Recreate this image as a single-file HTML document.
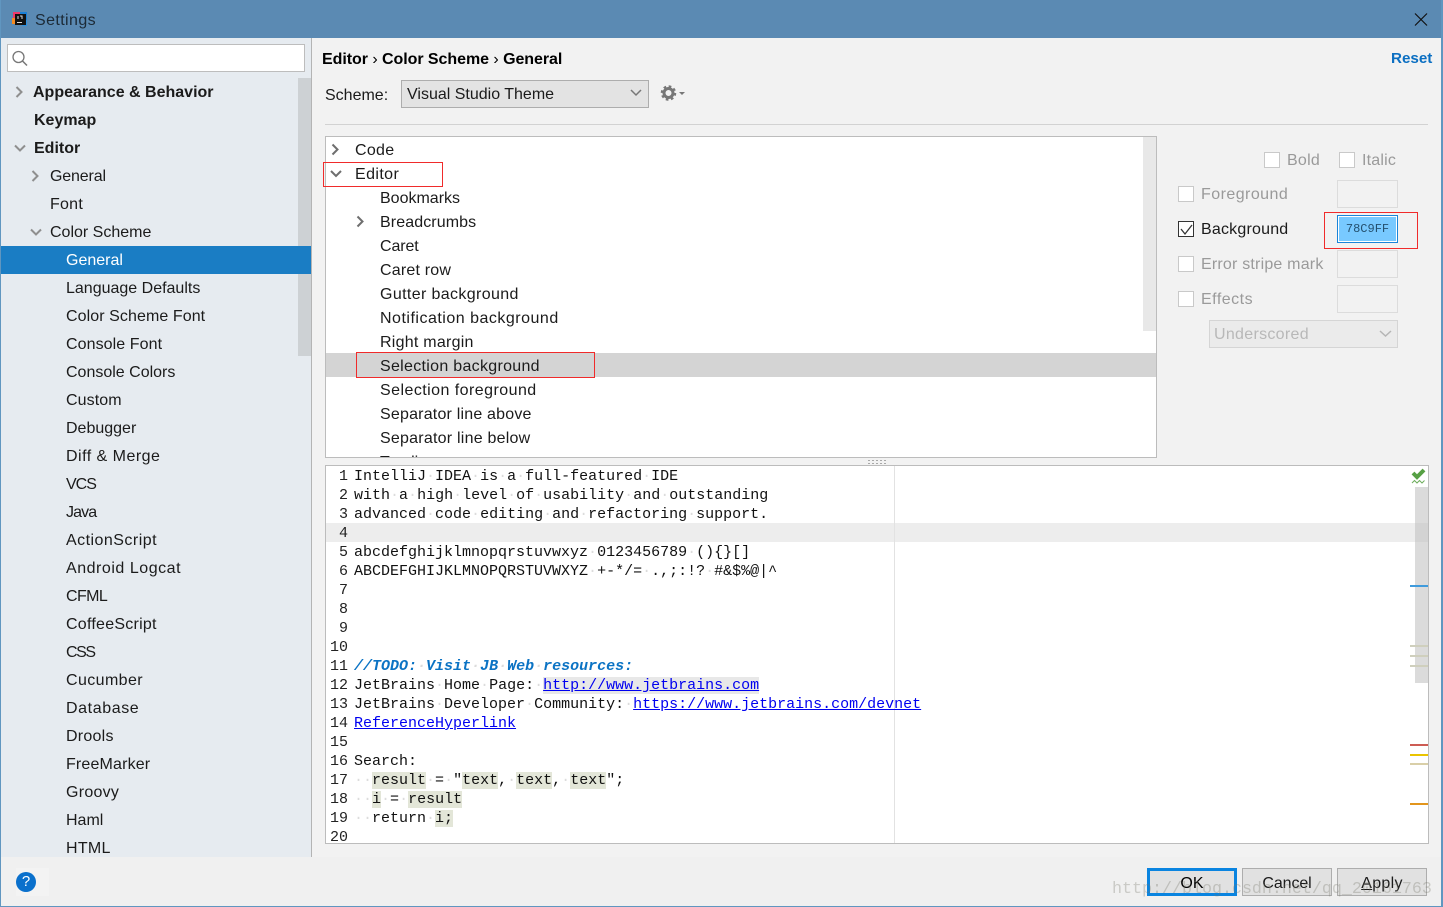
<!DOCTYPE html>
<html><head><meta charset="utf-8"><title>Settings</title>
<style>
html,body{margin:0;padding:0;width:1443px;height:907px;overflow:hidden;background:#f2f2f2}
body{position:relative;font-family:"Liberation Sans",sans-serif;font-size:16px;color:#1b1b1b}
.a{position:absolute}
.t{position:absolute;height:28px;line-height:28px;white-space:nowrap;margin-top:2px}
.s{left:66px}
.b{font-weight:bold;font-size:16px}
.tr{left:380px}
.g{color:#9a9a9a}
.c{position:absolute;width:14px;height:14px;background:#fff;border:1px solid #c9c9c9}
.sw{position:absolute;left:1337px;width:59px;height:26px;border:1px solid #dcdcdc;background:#f2f2f2}
.m{position:absolute;left:354px;height:19px;line-height:19px;margin-top:1px;font-family:"Liberation Mono",monospace;font-size:15px;white-space:pre;color:#111}
.n{position:absolute;left:326px;width:22px;text-align:right;height:19px;line-height:19px;margin-top:1px;font-family:"Liberation Mono",monospace;font-size:15px;color:#222}
.btn{position:absolute;top:868px;width:88px;height:26px;line-height:30px;border:1px solid #adadad;background:#e1e1e1;text-align:center}
.d{color:#dcdcdc}
.h{background:#e3e6d8}
.l{color:#0000f0;text-decoration:underline}
.r{position:absolute;border:1px solid #f02b2b;box-sizing:border-box}
.k{position:absolute;left:1410px;width:18px;height:2px}
</style></head><body>

<div class="a" style="left:0;top:0;width:1443px;height:38px;background:#5b8ab3"></div>
<div class="t" style="left:35px;top:5px;letter-spacing:.4px;color:#1c2a36">Settings</div>

<div class="a" style="left:1px;top:38px;width:310px;height:819px;background:#e6ebf0"></div>
<div class="a" style="left:311px;top:38px;width:1px;height:819px;background:#b4b4b4"></div>
<div class="a" style="left:7px;top:44px;width:296px;height:26px;background:#fff;border:1px solid #bdbdbd"></div>
<div class="a" style="left:298px;top:78px;width:13px;height:278px;background:#cdd1d4"></div>
<div class="a" style="left:1px;top:246px;width:310px;height:28px;background:#1a7dc4"></div>

<div class="t b" style="left:33px;top:77px">Appearance &amp; Behavior</div>
<div class="t b" style="left:34px;top:105px">Keymap</div>
<div class="t b" style="left:34px;top:133px">Editor</div>
<div class="t" style="left:50px;top:161px;letter-spacing:-.15px">General</div>
<div class="t" style="left:50px;top:189px;letter-spacing:.25px">Font</div>
<div class="t" style="left:50px;top:217px">Color Scheme</div>
<div class="t s" style="top:245px;color:#fff">General</div>
<div class="t s" style="top:273px">Language Defaults</div>
<div class="t s" style="top:301px;letter-spacing:.08px">Color Scheme Font</div>
<div class="t s" style="top:329px;letter-spacing:.08px">Console Font</div>
<div class="t s" style="top:357px">Console Colors</div>
<div class="t s" style="top:385px;letter-spacing:.1px">Custom</div>
<div class="t s" style="top:413px">Debugger</div>
<div class="t s" style="top:441px;letter-spacing:.48px">Diff &amp; Merge</div>
<div class="t s" style="top:469px;letter-spacing:-1px">VCS</div>
<div class="t s" style="top:497px;letter-spacing:-.9px">Java</div>
<div class="t s" style="top:525px;letter-spacing:.47px">ActionScript</div>
<div class="t s" style="top:553px;letter-spacing:.53px">Android Logcat</div>
<div class="t s" style="top:581px;letter-spacing:-.6px">CFML</div>
<div class="t s" style="top:609px;letter-spacing:.25px">CoffeeScript</div>
<div class="t s" style="top:637px;letter-spacing:-1.4px">CSS</div>
<div class="t s" style="top:665px;letter-spacing:.4px">Cucumber</div>
<div class="t s" style="top:693px;letter-spacing:.6px">Database</div>
<div class="t s" style="top:721px;letter-spacing:.25px">Drools</div>
<div class="t s" style="top:749px;letter-spacing:.16px">FreeMarker</div>
<div class="t s" style="top:777px;letter-spacing:.27px">Groovy</div>
<div class="t s" style="top:805px">Haml</div>
<div class="t s" style="top:833px;letter-spacing:.3px">HTML</div>

<div class="t b" style="left:322px;top:44px;color:#000;letter-spacing:-.05px">Editor <span style="font-weight:normal">›</span> Color Scheme <span style="font-weight:normal">›</span> General</div>
<div class="t b" style="left:1391px;top:43px;font-size:15.200px;color:#0b6fc2">Reset</div>
<div class="t" style="left:325px;top:80px">Scheme:</div>
<div class="a" style="left:401px;top:80px;width:246px;height:26px;background:#e3e3e3;border:1px solid #adadad"></div>
<div class="t" style="left:407px;top:79px">Visual Studio Theme</div>
<div class="a" style="left:325px;top:124px;width:1103px;height:1px;background:#d2d2d2"></div>

<div class="a" style="left:325px;top:136px;width:830px;height:320px;background:#fff;border:1px solid #bcbcbc;overflow:hidden">
  <div class="a" style="left:817px;top:0;width:13px;height:194px;background:#e8e8e8"></div>
  <div class="a" style="left:0;top:216px;width:830px;height:24px;background:#d4d4d4"></div>
  <div class="t" style="left:54px;top:310px">Tearlines</div>
</div>
<div class="t" style="left:355px;top:135px;letter-spacing:.3px">Code</div>
<div class="t" style="left:355px;top:159px;letter-spacing:.4px">Editor</div>
<div class="t tr" style="top:183px">Bookmarks</div>
<div class="t tr" style="top:207px;letter-spacing:.1px">Breadcrumbs</div>
<div class="t tr" style="top:231px;letter-spacing:-.1px">Caret</div>
<div class="t tr" style="top:255px;letter-spacing:.2px">Caret row</div>
<div class="t tr" style="top:279px;letter-spacing:.37px">Gutter background</div>
<div class="t tr" style="top:303px;letter-spacing:.5px">Notification background</div>
<div class="t tr" style="top:327px;letter-spacing:.25px">Right margin</div>
<div class="t tr" style="top:351px;letter-spacing:.3px">Selection background</div>
<div class="t tr" style="top:375px;letter-spacing:.45px">Selection foreground</div>
<div class="t tr" style="top:399px;letter-spacing:.2px">Separator line above</div>
<div class="t tr" style="top:423px;letter-spacing:.23px">Separator line below</div>

<div class="r" style="left:323px;top:162px;width:120px;height:25px"></div>
<div class="r" style="left:356px;top:352px;width:239px;height:26px"></div>
<div class="r" style="left:1324px;top:212px;width:94px;height:37px"></div>

<div class="c" style="left:1264px;top:152px"></div><div class="t g" style="left:1287px;top:145px;letter-spacing:.25px">Bold</div>
<div class="c" style="left:1339px;top:152px"></div><div class="t g" style="left:1362px;top:145px;letter-spacing:.2px">Italic</div>
<div class="c" style="left:1178px;top:186px"></div><div class="t g" style="left:1201px;top:179px;letter-spacing:.45px">Foreground</div>
<div class="c" style="left:1178px;top:221px;border-color:#333"></div><div class="t" style="left:1201px;top:214px;letter-spacing:.2px">Background</div>
<div class="c" style="left:1178px;top:256px"></div><div class="t g" style="left:1201px;top:249px;letter-spacing:.2px">Error stripe mark</div>
<div class="c" style="left:1178px;top:291px"></div><div class="t g" style="left:1201px;top:284px;letter-spacing:.5px">Effects</div>
<div class="sw" style="top:180px"></div>
<div class="a" style="left:1337px;top:215px;width:57px;height:24px;background:#78c9ff;border:1px solid #fff;outline:1px solid #1a84d8;outline-offset:0;margin:1px;font-family:'Liberation Mono',monospace;font-size:12px;line-height:24px;text-align:center;color:#24506e">78C9FF</div>
<div class="sw" style="top:250px"></div>
<div class="sw" style="top:285px"></div>
<div class="a" style="left:1209px;top:320px;width:187px;height:26px;background:#ebebeb;border:1px solid #d5d5d5"></div>
<div class="t" style="left:1214px;top:319px;color:#b8b8b8;letter-spacing:.3px">Underscored</div>

<div class="a" style="left:325px;top:465px;width:1102px;height:377px;background:#fff;border:1px solid #bcbcbc"></div>
<div class="a" style="left:326px;top:523px;width:1102px;height:19px;background:#ededed"></div>
<div class="a" style="left:894px;top:466px;width:1px;height:377px;background:#e2e2e2"></div>
<div class="a" style="left:1415px;top:487px;width:13px;height:196px;background:rgba(190,190,190,.55)"></div>

<div class="k" style="top:585px;background:#3f9bdc"></div>
<div class="k" style="top:645px;background:#cfcfbd"></div>
<div class="k" style="top:655px;background:#cfcfbd"></div>
<div class="k" style="top:665px;background:#cfcfbd"></div>
<div class="k" style="top:744px;background:#cd5c54"></div>
<div class="k" style="top:754px;background:#eac400"></div>
<div class="k" style="top:763px;background:#d9cfa8"></div>
<div class="k" style="top:803px;background:#e2951c"></div>

<div class="n" style="top:466px">1</div><div class="m" style="top:466px">IntelliJ<span class="d">·</span>IDEA<span class="d">·</span>is<span class="d">·</span>a<span class="d">·</span>full-featured<span class="d">·</span>IDE</div>
<div class="n" style="top:485px">2</div><div class="m" style="top:485px">with<span class="d">·</span>a<span class="d">·</span>high<span class="d">·</span>level<span class="d">·</span>of<span class="d">·</span>usability<span class="d">·</span>and<span class="d">·</span>outstanding</div>
<div class="n" style="top:504px">3</div><div class="m" style="top:504px">advanced<span class="d">·</span>code<span class="d">·</span>editing<span class="d">·</span>and<span class="d">·</span>refactoring<span class="d">·</span>support.</div>
<div class="n" style="top:523px">4</div>
<div class="n" style="top:542px">5</div><div class="m" style="top:542px">abcdefghijklmnopqrstuvwxyz<span class="d">·</span>0123456789<span class="d">·</span>(){}[]</div>
<div class="n" style="top:561px">6</div><div class="m" style="top:561px">ABCDEFGHIJKLMNOPQRSTUVWXYZ<span class="d">·</span>+-*/=<span class="d">·</span>.,;:!?<span class="d">·</span>#&amp;$%@|^</div>
<div class="n" style="top:580px">7</div>
<div class="n" style="top:599px">8</div>
<div class="n" style="top:618px">9</div>
<div class="n" style="top:637px">10</div>
<div class="n" style="top:656px">11</div><div class="m" style="top:656px;color:#0b73c4;font-weight:bold;font-style:italic">//TODO:<span class="d">·</span>Visit<span class="d">·</span>JB<span class="d">·</span>Web<span class="d">·</span>resources:</div>
<div class="n" style="top:675px">12</div><div class="m" style="top:675px">JetBrains<span class="d">·</span>Home<span class="d">·</span>Page:<span class="d">·</span><span class="l" style="background:#e8e8e8">http://www.jetbrains.com</span></div>
<div class="n" style="top:694px">13</div><div class="m" style="top:694px">JetBrains<span class="d">·</span>Developer<span class="d">·</span>Community:<span class="d">·</span><span class="l">https://www.jetbrains.com/devnet</span></div>
<div class="n" style="top:713px">14</div><div class="m" style="top:713px"><span class="l">ReferenceHyperlink</span></div>
<div class="n" style="top:732px">15</div>
<div class="n" style="top:751px">16</div><div class="m" style="top:751px">Search:</div>
<div class="n" style="top:770px">17</div><div class="m" style="top:770px"><span class="d">··</span><span class="h">result</span><span class="d">·</span>=<span class="d">·</span>"<span class="h">text</span>,<span class="d">·</span><span class="h">text</span>,<span class="d">·</span><span class="h">text</span>";</div>
<div class="n" style="top:789px">18</div><div class="m" style="top:789px"><span class="d">··</span><span class="h">i</span><span class="d">·</span>=<span class="d">·</span><span class="h">result</span></div>
<div class="n" style="top:808px">19</div><div class="m" style="top:808px"><span class="d">··</span>return<span class="d">·</span><span class="h">i;</span></div>
<div class="n" style="top:827px;height:15px;overflow:hidden">20</div>

<div class="a" style="left:0;top:857px;width:1443px;height:50px;background:#f0f0f0"></div>
<div class="a" style="left:16px;top:868px;width:33px;height:28px;background:#f3f3f3"></div>
<div class="a" style="left:16px;top:872px;width:20px;height:20px;border-radius:50%;background:#0a70cc;color:#fff;text-align:center;line-height:20px;font-size:15px">?</div>

<div class="btn" style="left:1147px;width:84px;height:22px;line-height:26px;border:3px solid #0a84e0;color:#000;letter-spacing:.1px">OK</div>
<div class="btn" style="left:1242px;letter-spacing:-.1px">Cancel</div>
<div class="btn" style="left:1337px;letter-spacing:.3px"><u>A</u>pply</div>
<div class="t" style="left:1112px;top:874px;font-family:'Liberation Mono',monospace;font-size:16.670px;color:rgba(120,120,110,.32)">http://blog.csdn.net/qq_20161763</div>

<div class="a" style="left:0;top:0;width:1px;height:907px;background:#6096c0"></div>
<div class="a" style="left:1441px;top:0;width:2px;height:907px;background:#6096c0"></div>
<div class="a" style="left:0;top:906px;width:1443px;height:1px;background:#6096c0"></div>

<svg class="a" style="left:0;top:0" width="1443" height="907" viewBox="0 0 1443 907" fill="none">
  <rect x="13" y="12" width="7" height="9" fill="#ee3a6a"/>
  <rect x="20" y="12" width="7" height="9" fill="#1a7fd6"/>
  <rect x="12" y="18" width="5" height="6" fill="#f58a20"/>
  <rect x="22" y="20" width="5" height="6" fill="#2a8fe0"/>
  <rect x="15" y="14" width="11" height="11" fill="#111"/>
  <rect x="17" y="22" width="5" height="1" fill="#ddd"/>
  <path d="M18 16v3M20 16h2v3" stroke="#ddd"/>
  <path d="M1415 13.500L1427 25.500M1427 13.500L1415 25.500" stroke="#111" stroke-width="1.200"/>

  <circle cx="18.500" cy="57" r="5.500" stroke="#777" stroke-width="1.300"/>
  <path d="M22.500 61L27 65.500" stroke="#777" stroke-width="1.500"/>

  <g stroke="#8f8f8f" stroke-width="2">
    <path d="M16.500 87L21.500 92L16.500 97"/>
    <path d="M15 145.500L20 150.500L25 145.500"/>
    <path d="M32.500 171L37.500 176L32.500 181"/>
    <path d="M31 229.500L36 234.500L41 229.500"/>
  </g>
  <g stroke="#6e6e6e" stroke-width="2">
    <path d="M332.500 144.500L337.500 149.500L332.500 154.500"/>
    <path d="M331 171L336 176L341 171"/>
    <path d="M357.500 216.500L362.500 221.500L357.500 226.500"/>
    <path d="M631 90L636 95L641 90" stroke="#777" stroke-width="1.500"/>
  </g>
  <path d="M1380 331L1385.500 336L1391 331" stroke="#b5b5b5" stroke-width="1.500"/>
  <path d="M1181 229L1185 234L1192 225" stroke="#333" stroke-width="1.300"/>

  <circle cx="668.500" cy="93" r="4.500" stroke="#777" stroke-width="3"/>
  <circle cx="668.500" cy="93" r="6.500" stroke="#777" stroke-width="2.500" stroke-dasharray="2.600 2.500"/>
  <path d="M679 92H685L682 95Z" fill="#777"/>

  <g fill="#a8a8a8">
    <rect x="868" y="460" width="2" height="1"/><rect x="872" y="460" width="2" height="1"/><rect x="876" y="460" width="2" height="1"/><rect x="880" y="460" width="2" height="1"/><rect x="884" y="460" width="2" height="1"/>
    <rect x="868" y="463" width="2" height="1"/><rect x="872" y="463" width="2" height="1"/><rect x="876" y="463" width="2" height="1"/><rect x="880" y="463" width="2" height="1"/><rect x="884" y="463" width="2" height="1"/>
  </g>

  <path d="M1413 473L1417 477L1424 470" stroke="#57a044" stroke-width="4"/>
  <path d="M1412 483L1414.500 480.500L1417 483L1419.500 480.500L1422 483L1424.500 480.500" stroke="#6fae5e" stroke-width="1"/>
</svg>
</body></html>
